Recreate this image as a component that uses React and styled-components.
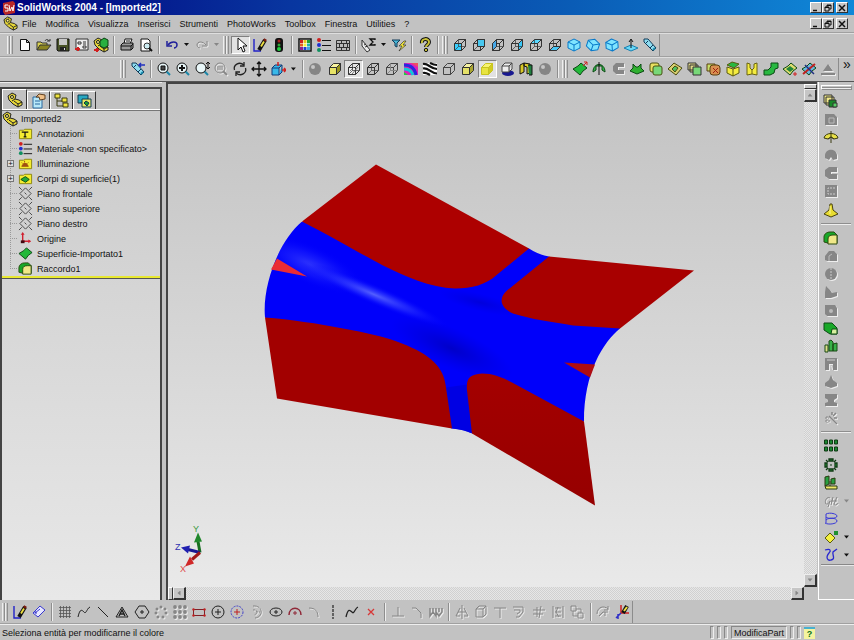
import React from 'react'
import styled, { createGlobalStyle } from 'styled-components'

const GlobalStyle = createGlobalStyle`
    * { box-sizing: border-box; }
    body {
        margin: 0;
        background: #c2c2c2;
        color: #111;
        font-family: "Liberation Sans", Arial, sans-serif;
        font-size: 9px;
    }
    button {
        font: inherit;
        color: inherit;
        padding: 0;
        border: 0;
        background: none;
    }
`

const K = '#111'
const G = '#868686'

/* small shapes that several icons share */
const Cube = ({ front = 'none', top = 'none', side = 'none', back, line = '#333', extra }) => (
    <g stroke={line} strokeLinejoin="round">
        <path d="M2.500 6.500H9.500V13.500H2.500Z" fill={front} />
        <path d="M2.500 6.500L6.500 2.500H13.500L9.500 6.500Z" fill={top} />
        <path d="M9.500 6.500L13.500 2.500V9.500L9.500 13.500Z" fill={side} />
        {extra}
        {back && <path d="M6.500 2.500V9.500H13.500M6.500 9.500L2.500 13.500" fill="none" strokeWidth=".7" />}
    </g>
)

const IsoCube = ({ turn }) => (
    <g transform={`rotate(${turn} 8 8)`} stroke="#0878c8" fill="#7fe4ff" strokeLinejoin="round">
        <path d="M2 5L8 2L14 5V11L8 14L2 11Z" />
        <path d="M2 5L8 8L14 5M8 8V14" fill="none" />
    </g>
)

const Lens = ({ off, children }) => (
    <g fill="none" stroke={off ? G : K}>
        <path d="M10 10L14 14" stroke={off ? G : '#1c86a8'} strokeWidth="2" />
        <circle cx="7" cy="7" r="5" fill={off ? 'none' : '#e8f6f8'} />
        {children}
    </g>
)

const Ball = () => (
    <g>
        <circle cx="8" cy="8" r="6" fill="#858585" />
        <circle cx="6" cy="6" r="2" fill="#c6c6c6" />
    </g>
)

const Pencil = () => (
    <g fill="none">
        <path d="M2 2V14H9" stroke="#2222c8" strokeWidth="1.4" />
        <path d="M7 13L13 3" stroke={K} strokeWidth="4" />
        <path d="M9 9.500L12 4.500" stroke="#f0e040" strokeWidth="1.8" />
        <path d="M12.500 4L13.500 2" stroke="#7a1a10" strokeWidth="3" />
    </g>
)

const Part = () => (
    <g stroke="#222" strokeLinejoin="round">
        <path d="M1 4L5 1L9 3L8 7L12 8L15 10V13L11 15L6 12L2 8Z" fill="#e8d838" />
        <path d="M3 5L6 3M8 7L5 9M11 15V12L15 10M11 12L7 9" fill="none" />
        <circle cx="5" cy="5" r="1.500" fill="#fff48a" />
    </g>
)

const Torch = () => (
    <g>
        <path d="M2 2L6 2L14 11L11 14L8 11L2 5Z" fill="#8edcf0" stroke="#123a58" />
        <path d="M4 6L6 4M8 11L11 8" stroke="#123a58" />
        <path d="M11 13L13 11" stroke="#1c86a8" strokeWidth="2" />
    </g>
)

const Sheet = ({ fill = '#22b83a' }) => (
    <path d="M1 8L6 5L9 2L15 7L11 10L8 14Z" fill={fill} stroke="#0c4a14" strokeLinejoin="round" />
)

const Plane = () => (
    <g fill="none" stroke="#444">
        <path d="M8 2L14 8L8 14L2 8Z" />
        <path d="M1 1L4 4M12 12L15 15M15 1L12 4M4 12L1 15M7 7L9 9" />
    </g>
)

const Folder = ({ children }) => (
    <g>
        <path d="M1.500 4.500H6L7 3.500H14.500V13.500H1.500Z" fill="#f4ec30" stroke="#8a8410" />
        {children}
    </g>
)

const Dots = ({ list, r = 1.2, fill = G }) => (
    <g fill={fill}>{list.map(([x, y]) => <circle key={`${x} ${y}`} cx={x} cy={y} r={r} />)}</g>
)

const grid3 = [3, 8, 13].flatMap(x => [3, 8, 13].map(y => [x, y]))
const ring = [[8, 3], [12, 5], [13, 9], [10, 13], [5, 13], [3, 9], [4, 5]]

const icons = {
    'Nuovo': <path d="M3.500 2.500H9.500L12.500 5.500V13.500H3.500ZM9.500 2.500V5.500H12.500" fill="#fff" stroke={K} />,
    'Apri': <g stroke="#333"><path d="M1 13V5H5L6 6H11V8" fill="#d8d050" /><path d="M1 13L4 8H15L11 13Z" fill="#8a8420" /><path d="M9 4C10 2 12 2 13 4M11 4H14V2" fill="none" /></g>,
    'Salva': <g><path d="M2 2H14V14H3L2 13Z" fill="#4a5428" stroke={K} /><path d="M4 2H12V8H4Z" fill="#c8c8c8" /><path d="M5 10H11V14H5Z" fill="#222" /><path d="M9 11H10V13H9Z" fill="#ddd" /></g>,
    'Crea disegno': <g><path d="M2 2H14V13H2Z" fill="#eee" stroke="#333" /><path d="M4 5H7V7H4ZM9 5H12M9 7H12M9 9V11H12V9Z" fill="none" stroke="#333" /><path d="M1 12H6M4 10V14" stroke="#d02020" strokeWidth="2" /></g>,
    'Crea assieme': <g><Part /><path d="M7 4L11 1L15 3V9L11 11L7 9Z" fill="#28b040" stroke="#0a4010" /><path d="M1 13H6M4 11V15" stroke="#d02020" strokeWidth="2" /></g>,
    'Stampa': <g stroke={K}><path d="M5 7L6 2H13L11 7" fill="#fff" /><path d="M2 8L4 6H14V11L12 13H2Z" fill="#9a9a9a" /><path d="M2 9H12V13M12 9L14 7M7 4H11" fill="none" /></g>,
    'Anteprima': <g><path d="M3 2H10L12 4V14H3Z" fill="#fff" stroke={K} /><circle cx="9" cy="9" r="3" fill="#cdeef4" stroke="#333" /><path d="M11 11L14 14" stroke={K} strokeWidth="2" /></g>,
    'Annulla': <g fill="none" stroke="#20209a" strokeWidth="1.500"><path d="M4 8C7 4 13 4 13 8C13 10 11 11 10 11" /><path d="M3 4V9H8" /></g>,
    'Ripristina': <g fill="none" stroke={G}><path d="M12 8C9 4 3 4 3 8C3 10 5 11 6 11" /><path d="M13 4V9H8" /></g>,
    'Seleziona': <path d="M5 1V13L8 10L10 15L12 14L10 9H14Z" fill="#fff" stroke={K} />,
    'Schizzo': <Pencil />,
    'Ricostruisci': <g><rect x="4" y="1" width="8" height="14" rx="3" fill="#111" /><circle cx="8" cy="4" r="1.500" fill="#a02020" /><circle cx="8" cy="8" r="1.500" fill="#30a838" /><circle cx="8" cy="12" r="2" fill="#20d040" /></g>,
    'Modifica colore': <g><path d="M2 2H14V14H2Z" fill="#fff" stroke={K} strokeWidth="1.500" />{['#d02020', '#e8c020', '#20a030', '#e06020', '#f0f040', '#20b0b0', '#902090', '#2040d0', '#40a0e0'].map((c, i) => <rect key={c} x={3 + (i % 3) * 3.5} y={3 + Math.floor(i / 3) * 3.5} width="3" height="3" fill={c} />)}</g>,
    'Materiale': <g><path d="M6 3.500H15M6 8.500H15M6 13.500H15" stroke={K} /><circle cx="3" cy="3" r="2" fill="#d02020" /><circle cx="3" cy="8" r="2" fill="#2030d0" /><circle cx="3" cy="13" r="2" fill="#109060" /></g>,
    'Trama': <path d="M1.500 3.500H14.500V13.500H1.500ZM2 6.500H14M2 10.500H14M6.500 3V6M11.500 3V6M4.500 6V10M8.500 6V10M12.500 6V10M6.500 10V13M11.500 10V13" fill="#bbb" stroke="#333" />,
    'Misura': <g fill="none" stroke="#333"><path d="M1 3L9 13L6 15L1 9Z" fill="#eee" /><path d="M3 8L5 7M4 10L7 9" /><path d="M14 3V2H9L12 5L9 8H14V7" stroke={K} strokeWidth="1.300" /></g>,
    'Filtro': <g><path d="M1 3H9L6 6V10L4 9V6Z" fill="#48b8d8" stroke="#123a58" /><path d="M13 4L8 9H11L8 14L15 8H12L15 4Z" fill="#f4e838" stroke="#333" strokeWidth=".7" /></g>,
    'Guida': <g><path d="M5 6C4 1 12 1 12 5C12 8 9 8 9 10" fill="none" stroke={K} strokeWidth="4" /><path d="M5 6C4 1 12 1 12 5C12 8 9 8 9 10" fill="none" stroke="#c8c038" strokeWidth="2" /><circle cx="9" cy="13" r="1.700" fill="#c8c038" stroke={K} /></g>,
    'Frontale': <Cube back front="#38d0ff" />,
    'Posteriore': <Cube back extra={<path d="M6.500 2.500H13.500V9.500H6.500Z" fill="#48c8f0" />} />,
    'Sinistra': <Cube back extra={<path d="M2.500 6.500L6.500 2.500V9.500L2.500 13.500Z" fill="#48a8e8" />} />,
    'Destra': <Cube back side="#38c8f8" />,
    'Superiore': <Cube back top="#58d8ff" />,
    'Inferiore': <Cube back extra={<path d="M2.500 13.500L6.500 9.500H13.500L9.500 13.500Z" fill="#48c8f8" />} />,
    'Isometrica': <IsoCube turn={0} />,
    'Trimetrica': <IsoCube turn={18} />,
    'Dimetrica': <IsoCube turn={-4} />,
    'Normale a': <g><path d="M1 11L8 8L15 11L8 14Z" fill="#68d8f8" stroke="#1880b0" /><path d="M8 11V3M6 5L8 2L10 5" fill="none" stroke={K} /></g>,
    'Orientamento': <Torch />,
    'Vista precedente': <g><Torch /><path d="M15 4H9M11 2L9 4L11 6" fill="none" stroke="#2030c0" strokeWidth="1.500" /></g>,
    'Zoom adatta': <Lens><path d="M5 5H9V9H5Z" fill="#444" /></Lens>,
    'Zoom area': <Lens><path d="M7 4V10M4 7H10" strokeWidth="2" /></Lens>,
    'Zoom dinamico': <Lens><path d="M14 1V8M12 3L14 1L16 3M12 6L14 8L16 6" /></Lens>,
    'Zoom selezione': <Lens off><path d="M4 6H10M4 8H10" /></Lens>,
    'Ruota vista': <g fill="none" stroke="#222" strokeWidth="1.300"><path d="M2.500 9C1 4 7 0 12 4M13.500 7C15 12 9 16 4 12" /><path d="M12 1V5H8M4 15V11H8" /></g>,
    'Sposta vista': <path d="M8 1V15M1 8H15M6 3L8 1L10 3M6 13L8 15L10 13M3 6L1 8L3 10M13 6L15 8L13 10" fill="none" stroke={K} strokeWidth="1.300" />,
    'Viste standard': <g><path d="M2 7H9V14H2ZM2 7L5 4H12L9 7M12 4V11L9 14" fill="#38b8e8" stroke="#123a78" /><path d="M8 5V1M12 9H16M14 7L16 9L14 11" stroke="#d02020" fill="none" strokeWidth="1.500" /></g>,
    'RealView': <Ball />,
    'Ombreggiato': <Cube front="#e8e468" top="#f8f4a0" side="#98941c" />,
    'Linee nascoste': <Cube back extra={<path d="M4 10L8 6M6 13L12 6" stroke="#777" />} front="#eee" />,
    'Struttura a reticolo': <Cube back />,
    'Linee nascoste in grigio': <Cube extra={<path d="M6.500 2.500V9.500H13.500M6.500 9.500L2.500 13.500" fill="none" stroke={G} />} line="#444" />,
    'Curvatura': <g><path d="M1 2H15V14H1Z" fill="#e020b8" /><path d="M1 4C8 4 12 8 13 14" fill="none" stroke="#2828e0" strokeWidth="3" /><path d="M1 8C6 8 9 11 10 14" fill="none" stroke="#10c8d8" strokeWidth="3" /><path d="M1 11L5 14H1Z" fill="#20d040" /><path d="M8 2H15V6Z" fill="#f05060" /></g>,
    'Zebra': <g fill="none" stroke={K} strokeWidth="2.200"><path d="M1 2H15V14H1Z" fill="#fff" stroke="none" /><path d="M1 3C6 2 9 8 15 8M1 7.500C6 6 9 12.500 15 12.500M1 12C4 11 6 13 8 14M8 2C10 3 12 4 15 4" /></g>,
    'Linee nascoste rimosse': <Cube line="#444" />,
    'Ombreggiato con bordi': <Cube front="#e4e068" top="#f4f0a0" side="#a8a430" />,
    'Ombreggiato pieno': <Cube front="#e8e440" top="#f8f470" side="#d0cc20" line="#c8c420" />,
    'Ombre': <g><ellipse cx="9" cy="12" rx="6" ry="3" fill="#181890" /><path d="M3 5H10V11H3ZM3 5L6 2H13L10 5M13 2V8L10 11" fill="#eee" stroke="#444" /></g>,
    'Vista in sezione': <g stroke={K}><path d="M2 4L6 2V11L2 13ZM6 2L12 3V12L9 13V6L6 5Z" fill="#d8c828" /><path d="M10 4L14 4V14L11 14" fill="#208040" /></g>,
    'PhotoWorks render': <Ball />,
    'Estrudi superficie': <g><Sheet /><path d="M11 5L15 1M12 1H15V4" stroke="#d02020" fill="none" /></g>,
    'Rivoluzione superficie': <g><path d="M2 11C2 1 14 1 14 11L11 9V5H5V9Z" fill="#30b848" stroke="#0c4a14" /><path d="M8 1V14" stroke={K} /></g>,
    'Sweep superficie': <path d="M6 2H14V6H8V9H14V13H6L3 10V5Z" fill={G} />,
    'Loft superficie': <path d="M1 10L4 7V3L7 6H9L12 3V7L15 10L8 13Z" fill="#30b030" stroke="#0c4a14" />,
    'Offset superficie': <g stroke="#4a5010"><rect x="2" y="2" width="9" height="9" rx="2" fill="#e8e060" /><rect x="5" y="5" width="9" height="9" rx="2" fill="#78d878" /></g>,
    'Superficie radiata': <g stroke="#4a4a10"><path d="M1 8L7 2L15 7L9 14Z" fill="#d8d070" /><path d="M5 8L8 5L11 7L8 11Z" fill="#50c060" /></g>,
    'Unisci superfici': <g stroke="#333"><path d="M1 2H9V9H1ZM3 4H11V11H3Z" fill="#e0d888" /><path d="M6 6H14V14H6Z" fill="#78d878" /></g>,
    'Elimina faccia': <g stroke="#5a4010"><path d="M1 3H9V10H1Z" fill="#c8e068" /><rect x="4" y="4" width="10" height="10" rx="3" fill="#d89050" /><path d="M7 7L12 12M12 7L7 12" stroke="#a02010" /></g>,
    'Sostituisci faccia': <g stroke="#5a5a10"><path d="M2 6L8 8L14 6V12L8 15L2 12ZM8 8V15" fill="#f4ec40" /><path d="M2 4L7 1L14 3L9 7Z" fill="#28b840" /></g>,
    'Ricama superficie': <path d="M3 2L6 3V7L8 9L10 7V3L13 2V14L8 13L3 14ZM8 9V13" fill="#f4ec40" stroke="#6a6410" />,
    'Superficie piana': <path d="M8 2H15V7L12 8L11 12L7 14H1V9H5L8 6Z" fill="#28b840" stroke="#0c4a14" />,
    'Estendi superficie': <g><Sheet fill="#e0dc70" /><path d="M4 8L8 5L12 8L8 11Z" fill="#228838" /><path d="M11 13H15M13 11V15" stroke="#d02020" /></g>,
    'Accorcia superficie': <g><Sheet fill="#68b8e0" /><path d="M2 13L14 3" stroke="#c02020" strokeWidth="2" /><path d="M4 4L13 13" stroke="#203080" strokeWidth="1.500" /></g>,
    'Annulla accorcia': <path d="M1 12H15V14H1ZM3 10L8 3L13 10Z" fill={G} />,

    'Estrusione': <g stroke="#333"><path d="M1 2H9V10H1ZM3 4H11V12H3Z" fill="#f0e888" /><path d="M6 7H13V14H6Z" fill="#188828" /><path d="M10 10H14V14H10Z" fill="#58d068" /></g>,
    'Taglio estruso': <g><path d="M2 3H11L14 6V14H2Z" fill={G} /><path d="M6 7H11V12H6Z" fill="none" stroke="#bbb" /></g>,
    'Rivoluzione': <g stroke="#3a3a10"><path d="M1 9C2 3 14 3 15 9L11 10L8 8L5 10Z" fill="#e8e048" /><path d="M8 2V14M5 10L8 8L11 10" fill="none" /></g>,
    'Taglio rivoluzione': <path d="M2 8C3 1 13 1 14 8V12L10 13L8 10L6 13L2 11Z" fill={G} />,
    'Sweep': <path d="M6 2H14V7H8V9H14V14H6L2 11V5Z" fill={G} />,
    'Taglio sweep': <g><path d="M2 2H14V14H2Z" fill={G} /><path d="M12 5H5V11H12" fill="none" stroke="#ccc" strokeDasharray="2 1" /></g>,
    'Loft': <g><path d="M7 2H9L10 8L15 12L8 15L1 12L6 8Z" fill="#e8dc30" stroke="#4a4410" /><path d="M7 4V12" stroke="#fff89a" /></g>,
    'Raccordo': <g stroke="#2a4a10"><path d="M1 12V7C1 4 4 2 7 2H11L14 5V13H5Z" fill="#18a828" /><path d="M5 14V9C5 6 7 5 10 5H14V14Z" fill="#f0e888" /></g>,
    'Smusso': <g><path d="M2 8L6 3H11L14 6V13H4L2 12Z" fill={G} /><path d="M6 13V8L9 6" fill="none" stroke="#bbb" /></g>,
    'Nervatura': <g><circle cx="8" cy="8" r="6" fill={G} /><path d="M8 2V14" stroke="#ccc" strokeDasharray="2 1" /></g>,
    'Svuota': <path d="M3 2L7 6L9 9L14 8V12L8 14H2V8Z" fill={G} />,
    'Sformo': <g><path d="M2 3H12L14 6V14H4L2 12Z" fill={G} /><circle cx="8" cy="9" r="2" fill="#bbb" /></g>,
    'Creazione guidata fori': <g stroke="#0c4a14"><path d="M1 3H9L14 8V14H7L1 10Z" fill="#18a828" /><path d="M9 9H14V14H8Z" fill="#d8f0a0" /></g>,
    'Scala': <g stroke="#1a4a14"><path d="M2 7H5V14H2Z" fill="#e0e088" /><path d="M6 3L8 2L10 4V13H6ZM10 6L14 5V13H10Z" fill="#38b048" /></g>,
    'Cupola': <g><path d="M2 2H14V14H10V8H6V14H2Z" fill={G} /><path d="M4 4H12M7 9L9 13" stroke="#ccc" /></g>,
    'Forma': <path d="M8 1L10 6L14 9V12L8 14L2 12V9L6 6Z" fill={G} />,
    'Deforma': <path d="M2 2H14V6L11 8V10L14 11V14H2V11L5 10V8L2 6Z" fill={G} />,
    'Fletti': <g stroke={G}><path d="M6 6L14 14M9 2V5M13 3L10 6M14 8H11" strokeWidth="1.500" fill="none" /><path d="M2 8H6M2 11H7M4 6V13" strokeDasharray="2 1" /></g>,
    'Ripetizione lineare': <g fill="#188830" stroke="#103a14">{[1.500, 6.500, 11.500].map(x => <path key={x} d={`M${x} 2H${x + 3}V6H${x}ZM${x} 9H${x + 3}V13H${x}Z`} />)}</g>,
    'Ripetizione circolare': <g stroke="#103a14"><path d="M6 2H10V4H6ZM6 12H10V14H6ZM2 6H4V10H2ZM12 6H14V10H12ZM3 3L5 5M11 5L13 3M3 13L5 11M11 11L13 13" fill="#28a040" strokeWidth="1.300" /><path d="M8 7V9" /></g>,
    'Specchia': <g stroke="#2a3a10"><path d="M2 2L6 1V9L2 11ZM8 4L12 3V9H8Z" fill="#28a040" /><path d="M2 11H14V14H3ZM7 6V11" fill="#f0e868" /></g>,
    'Geometria': <path d="M7 5C4 3 1 8 3 11C5 12 7 8 7 8L5 14M10 4L8 12M14 4L11 11C11 13 14 12 15 10M8 8H14" fill="none" stroke={G} />,
    'Elica': <path d="M3 3C7 1 14 3 14 5C14 8 4 8 3 6M3 9C6 6 14 7 14 10C14 13 5 14 2 12M3 3V12" fill="none" stroke="#3838d8" />,
    'Geometria di riferimento': <g><path d="M7 4L12 9L7 14L2 9Z" fill="#f4f040" stroke="#5a5a10" /><path d="M11 2H15V6H11Z" fill="#209030" /></g>,
    'Curve': <path d="M2 3C8 1 8 4 6 6C2 11 5 14 8 13C13 12 9 8 10 5L14 2" fill="none" stroke="#2828d0" strokeWidth="1.300" />,

    'Quota': <path d="M2 9L9 2L14 6L7 13ZM4 9L9 5M4 7V9H6" fill="#e8e8ff" stroke="#3838d0" />,
    'Griglia': <path d="M3.500 2V14M6.500 2V14M9.500 2V14M12.500 2V14M2 3.500H14M2 6.500H14M2 9.500H14M2 12.500H14" stroke="#555" strokeWidth=".8" />,
    'Spline': <path d="M2 13C4 4 6 6 8 8C10 11 11 4 14 3" fill="none" stroke="#222" />,
    'Linea': <path d="M3 3L13 13" stroke="#222" />,
    'Testo': <g fill="none" stroke="#222"><path d="M2 13L8 3L14 13Z" /><path d="M5 12L8 6L11 12M6 10H10" strokeWidth="1.500" /></g>,
    'Poligono': <g fill="none" stroke="#222"><path d="M5 2H11L15 8L11 14H5L1 8Z" /><path d="M8 6V10M6 8H10" /></g>,
    'Ripetizione punti': <Dots list={ring} r={1.5} />,
    'Ripetizione griglia': <Dots list={grid3} r={1.9} />,
    'Rettangolo': <g><path d="M2.500 5.500H13.500V11.500H2.500Z" fill="none" stroke="#802028" /><Dots list={[[2.5, 5.5], [13.5, 5.5], [2.5, 11.5], [13.5, 11.5]]} fill="#c02020" /></g>,
    'Cerchio': <g fill="none" stroke="#222"><circle cx="8" cy="8" r="6" /><path d="M8 5V11M5 8H11" /></g>,
    'Cerchio di costruzione': <g fill="none"><circle cx="8" cy="8" r="6" stroke="#4040c8" strokeDasharray="2 1" /><path d="M8 5V11M5 8H11" stroke="#c02020" /></g>,
    'Arco': <g fill="none" stroke={G}><path d="M5 2C15 1 16 13 7 14" /><path d="M5 6C10 5 10 10 6 11M8 8H12" strokeDasharray="2 1" /></g>,
    'Ellisse': <g fill="none" stroke="#222"><ellipse cx="8" cy="8" rx="6" ry="4" /><path d="M8 6V10M6 8H10" /></g>,
    'Arco tangente': <g fill="none" stroke="#902838"><path d="M2 11C2 2 14 2 14 11" strokeWidth="1.500" /><path d="M8 7V11M6 9H10" /></g>,
    'Arco a tre punti': <path d="M3 4C9 4 12 7 12 13" fill="none" stroke={G} />,
    'Linea di mezzeria': <path d="M8 1V15" stroke="#222" strokeDasharray="3 1" strokeWidth="1.200" />,
    'Curva': <path d="M2 13C4 4 6 6 8 8C10 11 11 4 14 3" fill="none" stroke="#222" strokeWidth="1.300" />,
    'Punto': <path d="M5 5L11 11M11 5L5 11" stroke="#d83838" strokeWidth="1.300" />,
    'Perpendicolare': <path d="M8 3V12M2 12H14" stroke={G} />,
    'Raccordo schizzo': <path d="M3 4H7L12 9V14" fill="none" stroke={G} />,
    'Testo schizzo': <path d="M2 4V12L5 8L8 12V4M8 8L11 12L14 8V4M5 4V8M11 4V8" fill="none" stroke={G} strokeWidth="1.500" />,
    'Specchia entità': <path d="M8 1V15M6 4L2 12H6M10 4L14 12H10M4 8H12" fill="none" stroke={G} />,
    'Converti entità': <path d="M3 5H10V13H3ZM3 5L6 2H13V10L10 13M10 5L13 2" fill="none" stroke={G} />,
    'Estendi': <path d="M2 4H14M8 4V14" fill="none" stroke={G} />,
    'Offset entità': <path d="M2 3H12V8L8 13H5M3 6H9V8L6 10" fill="none" stroke={G} />,
    'Accorcia': <path d="M2 6H14M2 10H12M6 3V13M10 2L8 14" fill="none" stroke={G} />,
    'Vincoli': <path d="M3 2V14M13 2V14M5 4H11M5 8H11M5 12H11M8 3L6 8L9 13" fill="none" stroke={G} />,
    'Blocco': <path d="M2 2H7V7H2ZM9 9H14V14H9ZM4 7V12H9M7 5H12V9" fill="none" stroke={G} />,
    'Ripara schizzo': <path d="M2 10C2 3 9 1 13 5M13 2V6H9M4 12L8 8H13M10 8V12" fill="none" stroke={G} />,
    'Schizzo 3D': <g fill="none"><path d="M7 1V9H15" stroke="#d02020" strokeWidth="1.500" /><path d="M7 9L2 14M4 10V15" stroke="#3030c8" strokeWidth="1.500" /><path d="M9 9L13 2" stroke={K} strokeWidth="4" /><path d="M10 7L13 3" stroke="#f0e040" strokeWidth="2" /></g>,

    'Imported2': <Part />,
    'Annotazioni': <Folder><path d="M4 6.500H11M7.500 6V11M6 11.500H9" stroke={K} strokeWidth="1.300" /></Folder>,
    'Illuminazione': <Folder><path d="M4 11H11L9 8H6ZM7 5V7M4 7L5 8M11 7L10 8" fill="#a05010" stroke="#a05010" /></Folder>,
    'Corpi di superficie(1)': <Folder><path d="M3 9L6 7L8 6L12 9L8 12Z" fill="#22a838" stroke="#0c4a14" /></Folder>,
    'Piano': <Plane />,
    'Origine': <g><path d="M5 3V11H13" fill="none" stroke="#d02030" strokeWidth="1.500" /><path d="M3 4L5 1L7 4ZM11 9V13L14 11Z" fill="#d02030" /><path d="M3 10H7V13H3Z" fill="#400810" /></g>,
    'Superficie': <Sheet />,
    'Proprietà': <g><path d="M2 4H11V15H2Z" fill="#b8e8f8" stroke="#2868a0" /><path d="M4 8H9M4 11H9" stroke="#2868a0" /><path d="M5 4L8 1L14 2V6L9 7L8 4Z" fill="#f0c088" stroke="#604020" /></g>,
    'Configurazioni': <g stroke="#3a3a10" fill="#f0e440"><path d="M3 4V13H9M3 8H8" fill="none" /><path d="M1 1H6V5H1ZM8 5H13V9H8ZM9 10H14V14H9Z" /></g>,
    'Annotazioni render': <g stroke="#103a50"><path d="M1 2H11V10H1Z" fill="#28a8c0" /><path d="M5 6H14V14H5Z" fill="#e8e860" /><path d="M7 10L9 8L12 10L10 13Z" fill="#18a030" /></g>,
}

const standardBar = ['#', 'Nuovo', 'Apri', 'Salva', 'Crea disegno', 'Crea assieme', '|', 'Stampa', 'Anteprima', '|', 'Annulla', 'v', '~Ripristina', '~v', '#',
    '*Seleziona', 'Schizzo', 'Ricostruisci', '|', 'Modifica colore', 'Materiale', 'Trama', '|', 'Misura', 'v', 'Filtro', '|', 'Guida', '|', '#',
    'Frontale', 'Posteriore', 'Sinistra', 'Destra', 'Superiore', 'Inferiore', 'Isometrica', 'Trimetrica', 'Dimetrica', 'Normale a', 'Orientamento']

const viewBar = ['#', 'Vista precedente', '|', 'Zoom adatta', 'Zoom area', 'Zoom dinamico', '~Zoom selezione', 'Ruota vista', 'Sposta vista', 'Viste standard', 'v', '|',
    'RealView', 'Ombreggiato', '*Linee nascoste', 'Struttura a reticolo', 'Linee nascoste in grigio', 'Curvatura', 'Zebra', 'Linee nascoste rimosse',
    'Ombreggiato con bordi', '*Ombreggiato pieno', 'Ombre', 'Vista in sezione', 'PhotoWorks render', '|', '#',
    'Estrudi superficie', 'Rivoluzione superficie', '~Sweep superficie', 'Loft superficie', 'Offset superficie', 'Superficie radiata', 'Unisci superfici',
    'Elimina faccia', 'Sostituisci faccia', 'Ricama superficie', 'Superficie piana', 'Estendi superficie', 'Accorcia superficie', '~Annulla accorcia']

const featureBar = ['Estrusione', '~Taglio estruso', 'Rivoluzione', '~Taglio rivoluzione', '~Sweep', '~Taglio sweep', 'Loft', '|',
    'Raccordo', '~Smusso', '~Nervatura', '~Svuota', '~Sformo', 'Creazione guidata fori', 'Scala', '~Cupola', '~Forma', '~Deforma', '~Fletti', '|',
    'Ripetizione lineare', 'Ripetizione circolare', 'Specchia', '~Geometria', 'Elica', 'Geometria di riferimento', 'Curve']

const sketchBar = ['#', 'Schizzo', 'Quota', '|', 'Griglia', 'Spline', 'Linea', 'Testo', 'Poligono', '~Ripetizione punti', '~Ripetizione griglia', 'Rettangolo',
    'Cerchio', 'Cerchio di costruzione', '~Arco', 'Ellisse', 'Arco tangente', '~Arco a tre punti', 'Linea di mezzeria', 'Curva', 'Punto', '|',
    '~Perpendicolare', '~Raccordo schizzo', '~Testo schizzo', '|', '~Specchia entità', '~Converti entità', '~Estendi', '~Offset entità', '~Accorcia',
    '~Vincoli', '~Blocco', '|', '~Ripara schizzo', 'Schizzo 3D']

const menus = ['File', 'Modifica', 'Visualizza', 'Inserisci', 'Strumenti', 'PhotoWorks', 'Toolbox', 'Finestra', 'Utilities', '?']

const tree = [
    { text: 'Annotazioni', icon: 'Annotazioni' },
    { text: 'Materiale <non specificato>', icon: 'Materiale' },
    { text: 'Illuminazione', icon: 'Illuminazione', closed: true },
    { text: 'Corpi di superficie(1)', icon: 'Corpi di superficie(1)', closed: true },
    { text: 'Piano frontale', icon: 'Piano' },
    { text: 'Piano superiore', icon: 'Piano' },
    { text: 'Piano destro', icon: 'Piano' },
    { text: 'Origine', icon: 'Origine' },
    { text: 'Superficie-Importato1', icon: 'Superficie' },
    { text: 'Raccordo1', icon: 'Raccordo' },
]

const Icon = ({ name, size = 16, off }) => (
    <IconSvg viewBox="0 0 16 16" width={size} height={size} $off={off} aria-hidden="true">{icons[name]}</IconSvg>
)

const Tools = ({ items, label, length, vertical }) => (
    <ToolGroup role="toolbar" aria-label={label} $length={length} $vertical={vertical}>
        {items.map((item, i) => {
            if (item === '#') return <Grip key={i} />
            if (item === '|') return <Separator key={i} $vertical={vertical} />
            const off = item[0] === '~'
            const name = item.replace(/^[~*]/, '')
            if (name === 'v') return <DropButton key={i} disabled={off} aria-label="Altre opzioni"><Triangle $dir="down" $off={off} /></DropButton>
            return (
                <ToolButton key={i} aria-label={name} disabled={off} $pressed={item[0] === '*'}>
                    <Icon name={name} off={off} />
                </ToolButton>
            )
        })}
    </ToolGroup>
)

const WindowControls = () => (
    <Controls>
        <ControlButton aria-label="Riduci a icona"><svg viewBox="0 0 8 8" width="8" height="8"><path d="M1 6.500H5" stroke={K} strokeWidth="1.500" /></svg></ControlButton>
        <ControlButton aria-label="Ripristina"><svg viewBox="0 0 8 8" width="8" height="8"><path d="M3 3V1H7V5H5M3 1.500H7M1 3H5V7H1ZM1 3.500H5" fill="none" stroke={K} /></svg></ControlButton>
        <ControlButton aria-label="Chiudi" $last><svg viewBox="0 0 8 8" width="8" height="8"><path d="M1 1L7 7M7 1L1 7" stroke={K} strokeWidth="1.500" /></svg></ControlButton>
    </Controls>
)

const Model = () => (
    <ModelSvg viewBox="168 84 636 502" role="img" aria-label="Superficie raccordata">
        <defs>
            <radialGradient id="shine">
                <stop offset="0" stopColor="#5560ff" />
                <stop offset=".5" stopColor="#2b34ff" stopOpacity=".6" />
                <stop offset="1" stopColor="#0000ff" stopOpacity="0" />
            </radialGradient>
            <radialGradient id="shade">
                <stop offset="0" stopColor="#0000b4" stopOpacity=".7" />
                <stop offset="1" stopColor="#0000d0" stopOpacity="0" />
            </radialGradient>
            <linearGradient id="low" x1="0" y1="0" x2="0" y2="1">
                <stop offset="0" stopColor="#a40000" />
                <stop offset="1" stopColor="#960000" />
            </linearGradient>
            <clipPath id="blend">
                <path d="M302 221L400 230L529 248Q538 254 549 256L600 290L620 328C603 342 584 372 584 421L540 430L472 433Q464 429 452 428L350 370L265 317C262 285 279 240 302 221Z" />
            </clipPath>
        </defs>
        <g clipPath="url(#blend)">
            <path d="M250 210H640V440H250Z" fill="#0000fa" />
            <ellipse cx="310" cy="264" rx="60" ry="20" transform="rotate(24 310 264)" fill="url(#shine)" opacity=".55" />
            <ellipse cx="374" cy="294" rx="82" ry="10" transform="rotate(23 374 294)" fill="url(#shine)" />
            <ellipse cx="452" cy="348" rx="66" ry="20" transform="rotate(24 452 348)" fill="url(#shade)" />
            <ellipse cx="480" cy="302" rx="42" ry="9" transform="rotate(14 480 302)" fill="url(#shade)" opacity=".6" />
            <path d="M446 387L452 436H474L467 384Z" fill="#0000d8" opacity=".7" />
        </g>
        <path d="M302 221L376 164L529 248L496 275C486 284 472 288 455 288C430 287 405 276 383 265C362 254 335 238 302 221Z" fill="#ad0000" />
        <path d="M549 256L694 270L620 328L573 325C550 321 532 319 513 313C502 308 497 299 507 290Z" fill="#a80000" />
        <path d="M265 317C290 319 318 323 343 328C365 332 385 336 402 343C430 354 444 366 446 387L452 428L277 398Z" fill="#a20000" />
        <path d="M472 433L467 390C466 378 469 374 482 373C493 373 502 377 512 382L584 421L595 505Z" fill="url(#low)" />
        <path d="M277 258L307 276L271 269Z" fill="#ea2c34" />
        <path d="M564 362L595 364L590 377Z" fill="#b00c10" />

        <g strokeWidth="3">
            <path d="M200 552L198 541" stroke="#187020" />
            <path d="M194 542L198 532L202 541Z" fill="#20882c" />
            <path d="M200 552L188 549" stroke="#181890" />
            <path d="M190 545L181 547L188 553Z" fill="#2020b0" />
            <path d="M200 552L192 559" stroke="#a01818" />
            <path d="M190 556L185 566L194 563Z" fill="#d02828" />
        </g>
        <g fontSize="9" fontFamily="Liberation Sans">
            <text x="193" y="531" fill="#3a9a40">Y</text>
            <text x="175" y="549" fill="#3030b0">Z</text>
            <text x="180" y="571" fill="#e04848">X</text>
        </g>
    </ModelSvg>
)

const App = () => {
    return (
        <Window>
            <GlobalStyle />
            <TitleBar>
                <svg viewBox="0 0 14 14" width="14" height="14" aria-hidden="true">
                    <path d="M1 2L11 0L13 2V12L3 14L1 11Z" fill="#b82828" />
                    <path d="M6 4H3V7H6V10H3M7 4L8 10L10 6L11 10L12 4" fill="none" stroke="#fff" />
                </svg>
                <h1>SolidWorks 2004 - [Imported2]</h1>
                <WindowControls />
            </TitleBar>
            <MenuBar>
                <Icon name="Imported2" size={15} />
                {menus.map(menu => <MenuButton key={menu}>{menu}</MenuButton>)}
                <WindowControls />
            </MenuBar>
            <ToolRow>
                <Tools items={standardBar} label="Standard" length={654} />
            </ToolRow>
            <ToolRow $indent>
                <Tools items={viewBar} label="Visualizza" length={720} />
                <MoreButton aria-label="Altri comandi">»</MoreButton>
            </ToolRow>

            <Main>
                <SidePanel>
                    <Tabs role="tablist">
                        {['Imported2', 'Proprietà', 'Configurazioni', 'Annotazioni render'].map((tab, i) => (
                            <Tab key={tab} role="tab" aria-label={tab} aria-selected={i === 0} $active={i === 0}><Icon name={tab} /></Tab>
                        ))}
                    </Tabs>
                    <TreeBox>
                        <TreeRoot><Icon name="Imported2" />Imported2</TreeRoot>
                        <Tree>
                            {tree.map(node => (
                                <TreeItem key={node.text}>
                                    {node.closed ? <Expander aria-label={`Espandi ${node.text}`}>+</Expander> : <Branch />}
                                    <Icon name={node.icon} size={15} />
                                    <span>{node.text}</span>
                                </TreeItem>
                            ))}
                        </Tree>
                        <Rollback />
                    </TreeBox>
                </SidePanel>

                <ViewFrame>
                    <Canvas><Model /></Canvas>
                    <ScrollBar $vertical>
                        <Splitter />
                        <ScrollButton aria-label="Su"><Triangle $dir="up" $off /></ScrollButton>
                        <Track />
                        <ScrollButton aria-label="Giù"><Triangle $dir="down" $off /></ScrollButton>
                    </ScrollBar>
                    <ScrollBar>
                        <Splitter />
                        <ScrollButton aria-label="Sinistra"><Triangle $dir="left" $off /></ScrollButton>
                        <Track />
                        <ScrollButton aria-label="Destra"><Triangle $dir="right" $off /></ScrollButton>
                    </ScrollBar>
                </ViewFrame>

                <FeatureColumn>
                    <FlatGrip />
                    <FeatureTools>
                        <Tools items={featureBar} label="Funzioni" length={472} vertical />
                        <DropColumn>
                            <DropButton disabled aria-label="Altra geometria"><Triangle $dir="down" $off /></DropButton>
                            <DropGap />
                            <DropButton aria-label="Altri riferimenti"><Triangle $dir="down" /></DropButton>
                            <DropButton aria-label="Altre curve"><Triangle $dir="down" /></DropButton>
                        </DropColumn>
                    </FeatureTools>
                </FeatureColumn>
            </Main>

            <ToolRow $bottom>
                <Tools items={sketchBar} label="Schizzo" length={632} />
            </ToolRow>
            <StatusBar>
                <StatusText>Seleziona entità per modificarne il colore</StatusText>
                <StatusCell />
                <StatusCell />
                <StatusCell />
                <StatusCell $wide>ModificaPart</StatusCell>
                <StatusCell />
                <StatusCell />
                <HelpButton aria-label="Suggerimenti">?</HelpButton>
            </StatusBar>
        </Window>
    )
}

const Window = styled.div`
    display: flex;
    flex-direction: column;
    min-height: 100vh;
    overflow: hidden;
`

const TitleBar = styled.header`
    display: flex;
    align-items: center;
    height: 15px;
    padding: 0 6px 0 2px;
    background: linear-gradient(90deg, #00007c, #0836a0 34%, #0a5cb6 67%, #1088d8);
    color: #fff;

    h1 {
        flex: 1;
        margin: 0 0 0 1px;
        font-size: 10px;
        line-height: 14px;
    }
`

const MenuBar = styled.nav`
    display: flex;
    align-items: center;
    gap: 9px;
    height: 17px;
    padding: 0 6px 0 3px;

    > svg {
        margin-right: -5px;
    }
`

const MenuButton = styled.button`
    line-height: 14px;
`

const Controls = styled.div`
    display: flex;
    margin-left: auto;
`

const ControlButton = styled.button`
    display: grid;
    place-items: center;
    width: 12px;
    height: 11px;
    margin-left: ${({ $last }) => ($last ? '2px' : '0')};
    background: #c6c6c6;
    border: 1px solid;
    border-color: #fff #333 #333 #fff;
`

const IconSvg = styled.svg`
    flex: none;
    filter: ${({ $off }) => ($off ? 'drop-shadow(1px 1px 0 #eee)' : 'none')};
`

const ToolRow = styled.div`
    display: flex;
    align-items: center;
    height: ${({ $indent }) => ($indent ? '25px' : '24px')};
    padding-left: ${({ $indent, $bottom }) => ($indent ? '119px' : $bottom ? '1px' : '6px')};
    border: solid #a0a0a0;
    border-width: ${({ $bottom }) => ($bottom ? '0 0 1px' : '1px 0 0')};
    box-shadow: inset 0 1px 0 ${({ $bottom }) => ($bottom ? '#c2c2c2' : '#dedede')};
`

const ToolGroup = styled.div`
    display: flex;
    flex-direction: ${({ $vertical }) => ($vertical ? 'column' : 'row')};
    width: ${({ $vertical, $length }) => ($vertical ? '20px' : `${$length}px`)};
    height: ${({ $vertical, $length }) => ($vertical ? `${$length}px` : '22px')};
    border: solid #8c8c8c;
    border-width: ${({ $vertical }) => ($vertical ? '0' : '0 1px 0 0')};
    align-items: center;
`

const ToolButton = styled.button`
    display: grid;
    place-items: center;
    flex: 1 1 18px;
    min-width: 18px;
    min-height: 18px;
    border: 1px solid;
    border-color: ${({ $pressed }) => ($pressed ? '#808080 #fff #fff #808080' : 'transparent')};
    background: ${({ $pressed }) => ($pressed ? '#e2e2e2' : 'none')};
`

const DropButton = styled.button`
    display: grid;
    place-items: center;
    flex: none;
    width: 11px;
    height: 18px;
`

const DropGap = styled.span`
    height: 18px;
`

const triangles = {
    up: 'polygon(50% 20%, 100% 80%, 0 80%)',
    down: 'polygon(0 20%, 100% 20%, 50% 80%)',
    left: 'polygon(20% 50%, 80% 0, 80% 100%)',
    right: 'polygon(80% 50%, 20% 0, 20% 100%)',
}

const Triangle = styled.span`
    width: 5px;
    height: 5px;
    background: ${({ $off }) => ($off ? '#868686' : '#111')};
    clip-path: ${({ $dir }) => triangles[$dir]};
`

const Separator = styled.span`
    flex: none;
    width: ${({ $vertical }) => ($vertical ? '30px' : '2px')};
    height: ${({ $vertical }) => ($vertical ? '2px' : '18px')};
    margin: ${({ $vertical }) => ($vertical ? '4px 0 4px 10px' : '0 2px 0 3px')};
    border: solid;
    border-color: #8e8e8e #eee #eee #8e8e8e;
    border-width: ${({ $vertical }) => ($vertical ? '1px 0' : '0 1px')};
`

const Grip = styled.span`
    flex: none;
    width: 6px;
    height: 18px;
    margin: 0 2px 0 1px;
    border: solid;
    border-color: #eee #8e8e8e #8e8e8e #eee;
    border-width: 0 1px;
    background: linear-gradient(90deg, #c2c2c2 1px, #8e8e8e 1px 2px, #eee 2px 3px, #c2c2c2 3px);
`

const MoreButton = styled.button`
    align-self: flex-start;
    margin-left: 4px;
    font-size: 14px;
    line-height: 14px;
`

const Main = styled.main`
    display: flex;
    flex: 1;
    gap: 4px;
    border-top: 1px solid #555;
`

const SidePanel = styled.aside`
    display: flex;
    flex-direction: column;
    width: 162px;
    margin-top: 5px;
    border: solid #444;
    border-width: 2px 2px 0 2px;
    background: #c2c2c2;
    box-shadow: 0 -4px 0 #c2c2c2, 0 -5px 0 #eee;
`

const Tabs = styled.div`
    display: flex;
    height: 20px;
`

const Tab = styled.button`
    display: grid;
    place-items: center;
    width: ${({ $active }) => ($active ? '25px' : '23px')};
    border: solid;
    border-color: #fff #333 #333 #fff;
    border-width: 1px 1px 0 1px;
    margin-top: ${({ $active }) => ($active ? '0' : '2px')};
`

const TreeBox = styled.div`
    flex: 1;
    border-top: 1px solid #fff;
    background: linear-gradient(#cacaca, #e8e8e8);
`

const TreeRoot = styled.div`
    display: flex;
    align-items: center;
    gap: 3px;
    height: 16px;
    border-top: 1px solid #777;
`

const Tree = styled.ul`
    margin: 0 0 0 8px;
    padding: 0;
    list-style: none;
    background: repeating-linear-gradient(#999 0 1px, transparent 1px 2px) 0 0 / 1px 142px no-repeat;
`

const TreeItem = styled.li`
    display: flex;
    align-items: center;
    height: 15px;
    white-space: nowrap;

    svg {
        margin-right: 4px;
    }
`

const Branch = styled.span`
    flex: none;
    width: 8px;
    height: 1px;
    background: repeating-linear-gradient(90deg, #999 0 1px, transparent 1px 2px);
`

const Expander = styled.button`
    width: 7px;
    height: 7px;
    margin: 0 4px 0 -3px;
    border: 1px solid #777;
    background: #ddd;
    font-size: 8px;
    line-height: 5px;
`

const Rollback = styled.div`
    height: 3px;
    border-bottom: 1px solid #555;
    background: #e8e830;
`

const ViewFrame = styled.section`
    display: grid;
    flex: 1;
    min-width: 0;
    grid-template-columns: minmax(0, 1fr) 13px;
    grid-template-rows: minmax(0, 1fr) 13px;
    border: solid #444;
    border-width: 2px 0 0 2px;
`

const Canvas = styled.div`
    min-height: 0;
    background: linear-gradient(#c2c2c2, #e9e9e9);
`

const ModelSvg = styled.svg`
    display: block;
    width: 100%;
    height: 100%;
`

const ScrollBar = styled.div`
    display: flex;
    flex-direction: ${({ $vertical }) => ($vertical ? 'column' : 'row')};
`

const Splitter = styled.span`
    flex: 0 0 5px;
    border: solid;
    border-color: #fff #333 #333 #fff;
    border-width: 1px;
    background: #c6c6c6;
`

const ScrollButton = styled.button`
    display: grid;
    place-items: center;
    width: 13px;
    height: 13px;
    background: #c6c6c6;
    border: solid;
    border-color: #eee #333 #333 #eee;
    border-width: 1px 2px 2px 1px;
`

const Track = styled.div`
    flex: 1;
    background: repeating-conic-gradient(#d0d0d0 0 25%, #e6e6e6 0 50%) 0 0 / 2px 2px;
`

const FeatureColumn = styled.aside`
    width: 36px;
    margin-left: -3px;
    padding-left: 2px;
    border-left: 1px solid #fff;
    border-bottom: 1px solid #fff;
`

const FlatGrip = styled.div`
    height: 5px;
    margin: 3px 2px 2px 0;
    border: solid;
    border-color: #fff #8e8e8e #8e8e8e #fff;
    border-width: 1px;
    background: linear-gradient(#c2c2c2 1px, #8e8e8e 1px 2px, #eee 2px);
`

const FeatureTools = styled.div`
    display: flex;
    border-bottom: 1px solid #888;
    box-shadow: 0 1px 0 #e8e8e8;
`

const DropColumn = styled.div`
    display: flex;
    flex-direction: column;
    justify-content: flex-end;
`

const StatusBar = styled.footer`
    display: flex;
    align-items: center;
    gap: 3px;
    height: 16px;
    padding: 0 39px 0 2px;
    border-top: 1px solid #eee;
`

const StatusText = styled.span`
    flex: 1;
`

const StatusCell = styled.span`
    width: ${({ $wide }) => ($wide ? '56px' : '4px')};
    height: 13px;
    padding-left: ${({ $wide }) => ($wide ? '2px' : '0')};
    line-height: 12px;
    border: 1px solid;
    border-color: #888 #eee #eee #888;
`

const HelpButton = styled.button`
    width: 11px;
    height: 12px;
    border-top: 2px solid #48b0d0;
    background: #f4f4a0;
    color: #087018;
    font-weight: 700;
    line-height: 10px;
`

export default App
